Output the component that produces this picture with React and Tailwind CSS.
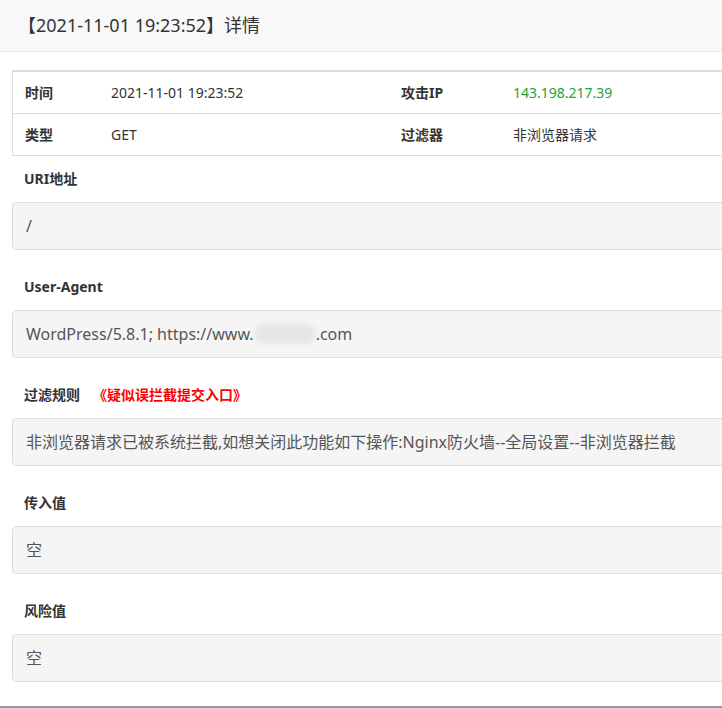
import React from "react";

const rows = [
  [
    { label: "时间", value: "2021-11-01 19:23:52" },
    { label: "攻击IP", value: "143.198.217.39", green: true },
  ],
  [
    { label: "类型", value: "GET" },
    { label: "过滤器", value: "非浏览器请求" },
  ],
];

const Field = ({ label, extra, children, first }) => (
  <div className={first ? "mt-[13px]" : "mt-[27px]"}>
    <div className="h-5 leading-5 pl-3 text-sm font-bold text-[#333] flex items-center">
      {label}
      {extra && <span className="ml-[13px] text-[#ff0000]">{extra}</span>}
    </div>
    <div className="mt-[13px] h-12 flex items-center px-[13px] bg-[#f5f5f5] border border-[#dedede] rounded text-base text-[#555] whitespace-nowrap">
      {children}
    </div>
  </div>
);

const App = () => {
  return (
    <div className="w-full h-[708px] overflow-hidden bg-white font-['Noto_Sans','Noto_Sans_CJK_SC',sans-serif]">
      <div className="h-[52px] bg-[#f8f8f8] border-b border-[#e8e8e8] flex items-center pl-[18px] text-[18px] text-[#333]">
        【2021-11-01 19:23:52】详情
      </div>

      <div className="w-[760px] pl-3">
        <div className="mt-[18px] border-t-2 border-l border-[#ddd]">
          {rows.map((row, i) => (
            <div
              key={i}
              className="grid grid-cols-[86px_290px_112px_1fr] h-[42px] border-b border-[#ddd] text-sm text-[#333]"
            >
              {row.map((cell) => (
                <React.Fragment key={cell.label}>
                  <div className="flex items-center pl-3 font-bold">{cell.label}</div>
                  <div className={"flex items-center pl-3 " + (cell.green ? "text-[#20a53a]" : "")}>
                    {cell.value}
                  </div>
                </React.Fragment>
              ))}
            </div>
          ))}
        </div>

        <Field label="URI地址" first>
          /
        </Field>

        <Field label="User-Agent">
          WordPress/5.8.1; https://www.
          <span className="inline-block w-[62px] h-[20px] bg-[#e6e6e6] rounded-full blur-[2px]"></span>
          .com
        </Field>

        <Field label="过滤规则" extra="《疑似误拦截提交入口》">
          非浏览器请求已被系统拦截,如想关闭此功能如下操作:Nginx防火墙--全局设置--非浏览器拦截
        </Field>

        <Field label="传入值">空</Field>

        <Field label="风险值">空</Field>
      </div>

      <div className="mt-[24px] h-[4px] bg-[#999]"></div>
    </div>
  );
};

export default App;
